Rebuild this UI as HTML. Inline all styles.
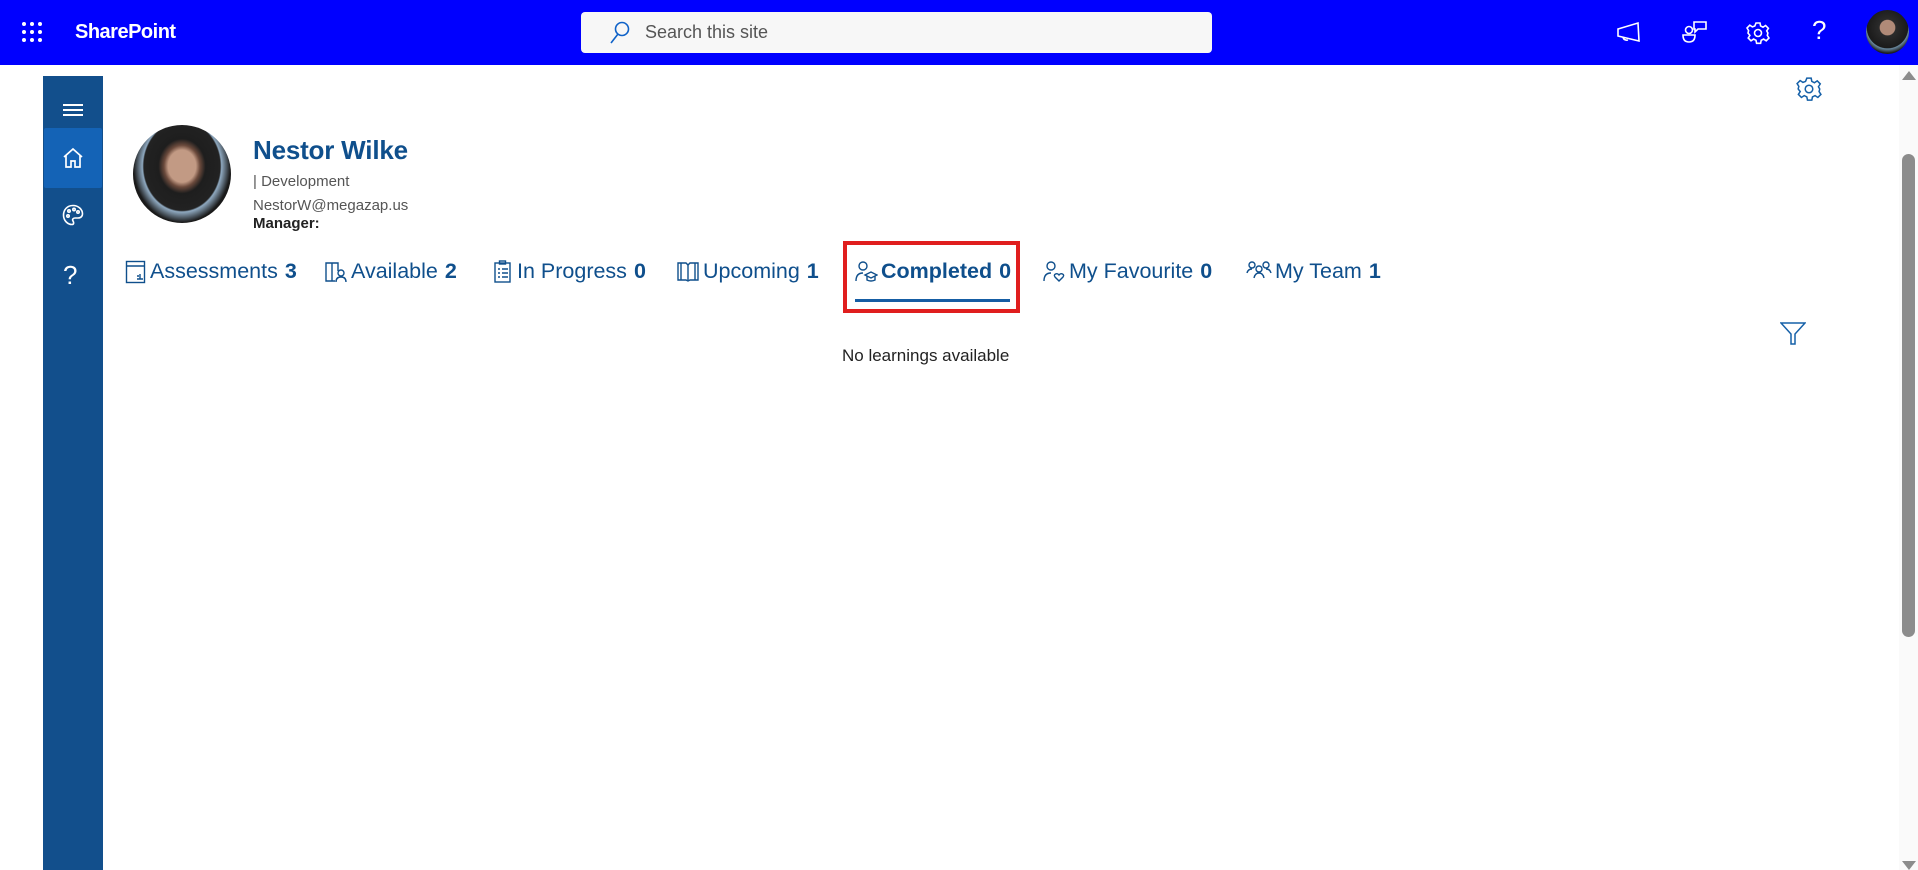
<!DOCTYPE html>
<html><head><meta charset="utf-8"><style>
*{margin:0;padding:0;box-sizing:border-box}
body{width:1918px;height:870px;overflow:hidden;background:#fff;font-family:"Liberation Sans",sans-serif;position:relative}
.hdr{position:absolute;left:0;top:0;width:1918px;height:65px;background:#0000ff}
.abs{position:absolute}
.side{position:absolute;left:43px;top:76px;width:60px;height:794px;background:#124f8c}
.tab{position:absolute;top:259px;font-size:21.5px;color:#0f4f8c;white-space:nowrap;display:flex;align-items:center}
.tab b{margin-left:7px}
.tab svg{margin-right:3px}
</style></head><body>
<div class="hdr">
 <svg class="abs" style="left:21px;top:21px" width="22" height="22" viewBox="0 0 22 22" fill="#fff">
  <circle cx="3" cy="3" r="2"/><circle cx="11" cy="3" r="2"/><circle cx="19" cy="3" r="2"/>
  <circle cx="3" cy="11" r="2"/><circle cx="11" cy="11" r="2"/><circle cx="19" cy="11" r="2"/>
  <circle cx="3" cy="19" r="2"/><circle cx="11" cy="19" r="2"/><circle cx="19" cy="19" r="2"/></svg>
 <div class="abs" style="left:75px;top:21px;color:#fff;font-size:20px;font-weight:bold;letter-spacing:-0.5px">SharePoint</div>
 <div class="abs" style="left:581px;top:12px;width:631px;height:41px;background:#f7f7f7;border-radius:4px">
  <svg class="abs" style="left:28px;top:9px" width="22" height="24" viewBox="0 0 22 24" fill="none" stroke="#0f62c8" stroke-width="1.6"><circle cx="13" cy="8" r="6.5"/><path d="M9 13 L2 22"/></svg>
  <div class="abs" style="left:64px;top:10px;font-size:18px;color:#555">Search this site</div>
 </div>
 <svg class="abs" style="left:1616px;top:20px" width="26" height="24" viewBox="0 0 26 24" fill="none" stroke="#fff" stroke-width="1.6"><path d="M2 9 L22 3 L23 21 L2 16 Z"/><path d="M7 17 Q8 21 12 20"/></svg>
 <svg class="abs" style="left:1682px;top:20px" width="26" height="24" viewBox="0 0 26 24" fill="none" stroke="#fff" stroke-width="1.6"><circle cx="7" cy="10" r="3.5"/><path d="M1 15 H13 Q13 22 7 22 Q1 22 1 15Z"/><path d="M12 2 H24 V9 H16 L13 12 V9 H12Z"/></svg>
 <svg class="abs" style="left:1746px;top:21px" width="24" height="24" viewBox="0 0 24 24" fill="none" stroke="#fff" stroke-width="1.6"><circle cx="12" cy="12" r="3.5"/><path d="M10 2h4l.6 3 2.4 1.2 2.6-1.7 2.8 2.8-1.7 2.6L21.9 12l-.6 2.4 1.7 2.6-2.8 2.8-2.6-1.7-2.4 1.2-.6 3h-4l-.6-3-2.4-1.2-2.6 1.7-2.8-2.8 1.7-2.6L2 12l.6-2.4L1 7l2.8-2.8 2.6 1.7L8.8 5z"/></svg>
 <div class="abs" style="left:1812px;top:15px;color:#fff;font-size:26px">?</div>
 <div class="abs" style="left:1866px;top:10px;width:43px;height:44px;border-radius:50%;background:radial-gradient(circle at 50% 40%,#b08a78 0 22%,#2b2b2b 24%,#1a1a1a 60%,#6a8aa0 62%,#1c1c1c 75%)"></div>
</div>
<div class="side">
 <div class="abs" style="left:20px;top:28px;width:20px;height:2px;background:#fff;box-shadow:0 5px 0 #fff,0 10px 0 #fff"></div>
 <div class="abs" style="left:1px;top:52px;width:58px;height:60px;background:#1463b6;border-radius:2px"></div>
 <svg class="abs" style="left:19px;top:71px" width="22" height="22" viewBox="0 0 22 22" fill="none" stroke="#fff" stroke-width="1.7"><path d="M2 10 L11 2 L20 10 M4 8 V20 H9 V14 H13 V20 H18 V8"/></svg>
 <svg class="abs" style="left:19px;top:128px" width="22" height="22" viewBox="0 0 22 22" fill="none" stroke="#fff" stroke-width="1.6"><path d="M11 1.5 C5 1.5 1.5 6 1.5 11 C1.5 17 6 20.5 10 20.5 C12 20.5 12 18.5 11 17 C10 15.5 11 14 13 14 H16 C19 14 20.5 12 20.5 10 C20.5 5 16 1.5 11 1.5Z"/><circle cx="7" cy="7" r="1.2"/><circle cx="12" cy="5.5" r="1.2"/><circle cx="16" cy="8" r="1.2"/><circle cx="6" cy="12" r="1.2"/></svg>
 <div class="abs" style="left:20px;top:184px;color:#fff;font-size:26px">?</div>
</div>
<div class="abs" style="left:133px;top:125px;width:98px;height:98px;border-radius:50%;background:radial-gradient(ellipse at 50% 42%,#c29a84 0 20%,#6b4a3c 26%,#1e1e1e 34%,#222 55%,#8fa9c0 57%,#1a1a1a 70%)"></div>
<div class="abs" style="left:253px;top:135px;font-size:26px;color:#0f4f8c;font-weight:bold;letter-spacing:-0.2px">Nestor Wilke</div>
<div class="abs" style="left:253px;top:173px;font-size:15px;color:#555">| Development</div>
<div class="abs" style="left:253px;top:197px;font-size:15px;color:#555">NestorW@megazap.us</div>
<div class="abs" style="left:253px;top:215px;font-size:15px;color:#222;font-weight:bold">Manager:</div>
<svg class="abs" style="left:1796px;top:76px" width="26" height="26" viewBox="0 0 24 24" fill="none" stroke="#1560a8" stroke-width="1.4"><circle cx="12" cy="12" r="3.5"/><path d="M10 2h4l.6 3 2.4 1.2 2.6-1.7 2.8 2.8-1.7 2.6L21.9 12l-.6 2.4 1.7 2.6-2.8 2.8-2.6-1.7-2.4 1.2-.6 3h-4l-.6-3-2.4-1.2-2.6 1.7-2.8-2.8 1.7-2.6L2 12l.6-2.4L1 7l2.8-2.8 2.6 1.7L8.8 5z"/></svg>

<div class="tab" style="left:125px"><svg width="22" height="24" viewBox="0 0 22 24" fill="none" stroke="#0f4f8c" stroke-width="1.4"><rect x="1.5" y="1.5" width="18" height="21"/><path d="M1.5 6H19.5M12 16h2M12 19h6M15 14v5"/></svg>Assessments<b>3</b></div>
<div class="tab" style="left:324px"><svg width="24" height="24" viewBox="0 0 24 24" fill="none" stroke="#0f4f8c" stroke-width="1.4"><path d="M2 3h6v18H2zM8 3h6v8M8 21h3"/><circle cx="17" cy="13" r="3"/><path d="M12 22q0-5 5-5t5 5"/></svg>Available<b>2</b></div>
<div class="tab" style="left:492px"><svg width="22" height="24" viewBox="0 0 22 24" fill="none" stroke="#0f4f8c" stroke-width="1.4"><rect x="3" y="3" width="15" height="19"/><rect x="7.5" y="1" width="6" height="3"/><path d="M6 9h2M10 9h6M6 13h2M10 13h6M6 17h2M10 17h6"/></svg>In Progress<b>0</b></div>
<div class="tab" style="left:676px"><svg width="24" height="24" viewBox="0 0 24 24" fill="none" stroke="#0f4f8c" stroke-width="1.4"><path d="M2 3h8l2 2 2-2h8v17h-8l-2 1-2-1H2z"/><path d="M12 5v15M5 3v17M19 3v17"/></svg>Upcoming<b>1</b></div>
<div class="tab" style="left:854px;font-weight:bold"><svg width="24" height="24" viewBox="0 0 24 24" fill="none" stroke="#0f4f8c" stroke-width="1.4"><circle cx="9" cy="6" r="4"/><path d="M2 21q0-8 7-8"/><path d="M11 15l6-3 6 3-6 3z"/><path d="M13 16v4q4 2 8 0v-4"/></svg>Completed<b>0</b></div>
<div class="abs" style="left:843px;top:241px;width:177px;height:72px;border:4px solid #e01e1e"></div>
<div class="abs" style="left:855px;top:299px;width:155px;height:3px;background:#155da4"></div>
<div class="tab" style="left:1042px"><svg width="24" height="24" viewBox="0 0 24 24" fill="none" stroke="#0f4f8c" stroke-width="1.4"><circle cx="9" cy="6" r="4"/><path d="M2 21q0-8 7-8"/><path d="M17 21l-4-4q-1.5-2 .5-3t3.5 1q1.5-2 3.5-1t.5 3z"/></svg>My Favourite<b>0</b></div>
<div class="tab" style="left:1246px"><svg width="26" height="24" viewBox="0 0 26 24" fill="none" stroke="#0f4f8c" stroke-width="1.4"><circle cx="6" cy="5" r="3"/><circle cx="20" cy="5" r="3"/><circle cx="13" cy="9" r="3"/><path d="M1 13q1-4 5-4M25 13q-1-4-5-4M8 18q1-5 5-5t5 5"/></svg>My Team<b>1</b></div>

<div class="abs" style="left:842px;top:346px;font-size:17px;color:#222">No learnings available</div>
<svg class="abs" style="left:1780px;top:322px" width="26" height="24" viewBox="0 0 26 24" fill="none" stroke="#1560a8" stroke-width="1.5"><path d="M1 1H25L15 12V22H11V12Z"/></svg>

<div class="abs" style="left:1899px;top:65px;width:19px;height:805px;background:#fafafa"></div>
<div class="abs" style="left:1902px;top:71px;width:0;height:0;border-left:7px solid transparent;border-right:7px solid transparent;border-bottom:9px solid #8c8c8c"></div>
<div class="abs" style="left:1902px;top:154px;width:13px;height:483px;background:#8c8c8c;border-radius:7px"></div>
<div class="abs" style="left:1902px;top:861px;width:0;height:0;border-left:7px solid transparent;border-right:7px solid transparent;border-top:9px solid #8c8c8c"></div>
</body></html>
